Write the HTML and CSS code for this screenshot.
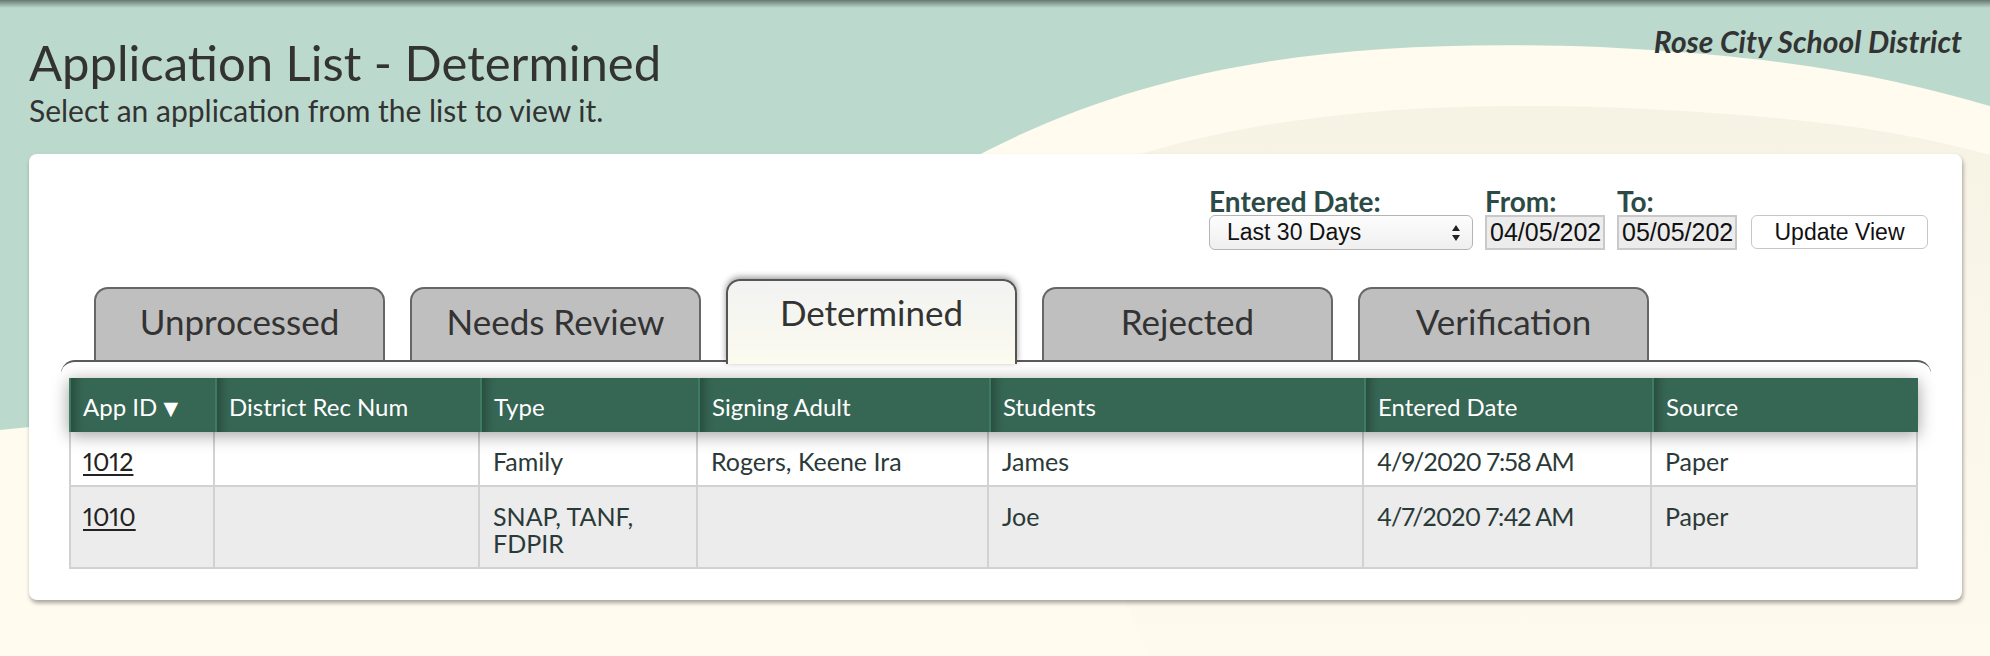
FILE: index.html
```html
<!DOCTYPE html>
<html lang="en">
<head>
<meta charset="utf-8">
<title>Application List - Determined</title>
<link rel="stylesheet" href="styles.css">
</head>
<body>
<svg class="backdrop" viewBox="0 0 1990 656" preserveAspectRatio="none" aria-hidden="true">
  <defs>
    <linearGradient id="topsh" x1="0" y1="0" x2="0" y2="1">
      <stop offset="0" stop-color="#000" stop-opacity=".45"/>
      <stop offset="1" stop-color="#000" stop-opacity="0"/>
    </linearGradient>
    <linearGradient id="band" x1="0" y1="0" x2="0" y2="1">
      <stop offset="0" stop-color="#f6f2e4"/>
      <stop offset=".55" stop-color="#fbf7ea"/>
      <stop offset="1" stop-color="#fefaed"/>
    </linearGradient>
  </defs>
  <rect width="1990" height="656" fill="#bbdacd"/>
  <path d="M0 430 C400 390 800 260 960 165 C1150 60 1350 38 1600 47 C1800 57 1900 80 1990 106 L1990 656 L0 656 Z" fill="#fffbee"/>
  <path d="M960 230 C1150 125 1350 100 1600 107 C1800 115 1900 130 1990 155 L1990 656 L1150 656 C1080 500 1000 380 960 230 Z" fill="url(#band)"/>
  <rect width="1990" height="8" fill="url(#topsh)"/>
</svg>

<div class="page">
  <header class="top">
    <div class="titles">
      <h1>Application List - Determined</h1>
      <p class="sub">Select an application from the list to view it.</p>
    </div>
    <div class="district">Rose City School District</div>
  </header>

  <main class="panel">
    <div class="filters">
      <div class="fgroup">
        <span class="flabel">Entered Date:</span>
        <div class="select">
          <span>Last 30 Days</span>
          <svg class="arrows" viewBox="0 0 10 18" width="10" height="18"><path d="M1 7 L5 1 L9 7 Z M1 11 L5 17 L9 11 Z" fill="#222"/></svg>
        </div>
      </div>
      <div class="fgroup">
        <span class="flabel">From:</span>
        <input class="dinput" type="text" value="04/05/2020" readonly>
      </div>
      <div class="fgroup">
        <span class="flabel">To:</span>
        <input class="dinput" type="text" value="05/05/2020" readonly>
      </div>
      <div class="fgroup">
        <button class="btn" type="button">Update View</button>
      </div>
    </div>

    <nav class="tabs">
      <a class="tab">Unprocessed</a>
      <a class="tab">Needs Review</a>
      <a class="tab active">Determined</a>
      <a class="tab">Rejected</a>
      <a class="tab">Verification</a>
    </nav>

    <section class="tablebox">
      <div class="thead">
        <div class="th">App ID <span class="sort">▼</span></div>
        <div class="th">District Rec Num</div>
        <div class="th">Type</div>
        <div class="th">Signing Adult</div>
        <div class="th">Students</div>
        <div class="th">Entered Date</div>
        <div class="th">Source</div>
      </div>
      <div class="row odd">
        <div class="td"><a class="applink">1012</a></div>
        <div class="td"></div>
        <div class="td">Family</div>
        <div class="td">Rogers, Keene Ira</div>
        <div class="td">James</div>
        <div class="td date">4/9/2020 7:58 AM</div>
        <div class="td">Paper</div>
      </div>
      <div class="row even">
        <div class="td"><a class="applink">1010</a></div>
        <div class="td"></div>
        <div class="td">SNAP, TANF,<br>FDPIR</div>
        <div class="td"></div>
        <div class="td">Joe</div>
        <div class="td date">4/7/2020 7:42 AM</div>
        <div class="td">Paper</div>
      </div>
    </section>
  </main>
</div>
</body>
</html>
```

FILE: styles.css
```css
* { box-sizing: border-box; }

html, body {
  margin: 0;
  width: 1990px;
  height: 656px;
  overflow: hidden;
}

body {
  position: relative;
  background: #bbdacd;
  font-family: Lato, "Open Sans", "DejaVu Sans", sans-serif;
  color: #333;
}

.backdrop {
  position: absolute;
  left: 0;
  top: 0;
  width: 1990px;
  height: 656px;
  z-index: 0;
}

.page {
  position: relative;
  z-index: 1;
  padding: 0 28px 0 29px;
}

/* ---------- heading ---------- */
.top {
  display: flex;
  justify-content: space-between;
  align-items: flex-start;
  height: 154px;
}

.titles { padding-top: 35px; }

h1 {
  margin: 0;
  font-size: 49px;
  line-height: 55px;
  font-weight: 400;
  color: #333;
}

.sub {
  margin: 4px 0 0;
  font-size: 30px;
  line-height: 32px;
  color: #333;
}

.district {
  margin-top: 24px;
  font-size: 30px;
  line-height: 34px;
  font-weight: 700;
  font-style: italic;
  color: #333;
}

/* ---------- panel ---------- */
.panel {
  height: 446px;
  background: #fff;
  border-radius: 8px;
  box-shadow: 1px 3px 4px rgba(0, 0, 0, .35);
  padding: 34px 31px 0 32px;
}

.filters {
  display: flex;
  justify-content: flex-end;
  align-items: flex-end;
  gap: 12px;
  padding-right: 3px;
}

.fgroup {
  display: flex;
  flex-direction: column;
  align-items: flex-start;
}

.flabel {
  font-size: 28px;
  line-height: 26px;
  font-weight: 700;
  color: #2c4b46;
  margin-bottom: 1px;
}

.select {
  width: 264px;
  height: 35px;
  display: flex;
  align-items: center;
  justify-content: space-between;
  padding: 0 11px 0 17px;
  border: 1.5px solid #b4b4b4;
  border-radius: 6px;
  background: linear-gradient(#fdfdfd, #efefef);
  font-family: "Liberation Sans", Arial, sans-serif;
  font-size: 23px;
  color: #111;
}

.arrows { display: block; }

.dinput {
  display: block;
  width: 120px;
  height: 35px;
  margin: 0;
  padding: 0 2px 0 3px;
  background: #ececec;
  border: 2px solid #c9c9c9;
  border-radius: 0;
  outline: none;
  font-family: "Liberation Sans", Arial, sans-serif;
  font-size: 25px;
  color: #111;
}

.btn {
  margin: 0 0 1px 2px;
  width: 177px;
  height: 34px;
  background: #fff;
  border: 1px solid #c6c6c6;
  border-radius: 6px;
  font-family: "Liberation Sans", Arial, sans-serif;
  font-size: 23px;
  color: #111;
  padding: 0;
}

/* ---------- tabs ---------- */
.tabs {
  display: flex;
  align-items: flex-end;
  gap: 25px;
  height: 81px;
  margin: 29px 0 0 33px;
}

.tab {
  width: 291px;
  height: 73px;
  padding-top: 12px;
  background: #bfbfbf;
  border: 2px solid #666;
  border-bottom: 0;
  border-radius: 14px 14px 0 0;
  text-align: center;
  font-size: 35px;
  line-height: 40px;
  color: #333;
}

.tab.active {
  position: relative;
  z-index: 2;
  height: 85px;
  margin-bottom: -4px;
  padding-top: 11px;
  background: linear-gradient(#f2f2f2, #fbfbef);
  border-color: #555;
  box-shadow: 0 -2px 6px rgba(0, 0, 0, .4);
}

/* ---------- table ---------- */
.tablebox {
  position: relative;
  z-index: 1;
  border-top: 2px solid #5a5a5a;
  border-radius: 14px 14px 0 0;
  padding: 16px 13px 0 8px;
}

.thead, .row {
  display: grid;
  grid-template-columns: 146px 265px 218px 291px 375px 288px 266px;
}

.thead {
  position: relative;
  z-index: 1;
  background: #366654;
  box-shadow: 0 3px 16px rgba(0, 0, 0, .38);
}

.th {
  height: 54px;
  padding: 15px 8px 0 12px;
  border-left: 2px solid #3f7b61;
  box-shadow: inset 12px 0 10px -8px rgba(0, 0, 0, .28);
  color: #fff;
  font-size: 24px;
  line-height: 27px;
}

.sort {
  font-family: "DejaVu Sans", sans-serif;
  font-size: 19px;
  vertical-align: 1px;
}

.td {
  padding: 16px 8px 10px 13px;
  border-right: 2px solid #d2d2d2;
  border-bottom: 2px solid #d2d2d2;
  font-size: 25px;
  line-height: 27px;
  color: #2a3a38;
  font-variant-numeric: proportional-nums;
}

.td.date { letter-spacing: -0.9px; }

.td:first-child {
  border-left: 2px solid #d2d2d2;
  padding-left: 12px;
}

.row.odd .td { background: #fff; height: 55px; }
.row.even .td { background: #ececec; height: 82px; }

.applink {
  color: #222;
  text-decoration: underline;
  text-underline-offset: 3px;
}
```
